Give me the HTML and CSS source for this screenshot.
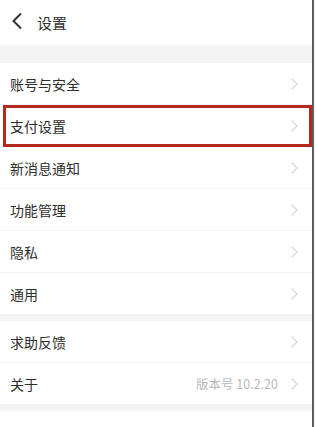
FILE: index.html
```html
<!DOCTYPE html>
<html lang="zh-CN">
<head>
  <meta charset="UTF-8">
  <meta name="viewport" content="width=device-width, initial-scale=1.0">
  <title>设置</title>
  <link rel="stylesheet" href="styles.css">
</head>
<body>
  <div class="screen">
    <div class="topbar">
      <svg class="back" width="13" height="18" viewBox="0 0 13 18">
        <path d="M10 1.5 L2.5 9 L10 16.5" fill="none" stroke="#333" stroke-width="2"/>
      </svg>
      <span class="title">设置</span>
    </div>

    <div class="gap"></div>

    <div class="group">
      <div class="row"><span class="label">账号与安全</span><span class="arrow"></span></div>
      <div class="row highlight"><span class="label">支付设置</span><span class="arrow"></span></div>
      <div class="row"><span class="label">新消息通知</span><span class="arrow"></span></div>
      <div class="row"><span class="label">功能管理</span><span class="arrow"></span></div>
      <div class="row"><span class="label">隐私</span><span class="arrow"></span></div>
      <div class="row last"><span class="label">通用</span><span class="arrow"></span></div>
    </div>

    <div class="gap small"></div>

    <div class="group">
      <div class="row"><span class="label">求助反馈</span><span class="arrow"></span></div>
      <div class="row last">
        <span class="label">关于</span>
        <span class="value">版本号 10.2.20</span>
        <span class="arrow"></span>
      </div>
    </div>

    <div class="gap small"></div>
  </div>
</body>
</html>
```

FILE: styles.css
```css
body {
  margin: 0;
  padding: 0;
  background: #fff;
  font-family: "Noto Sans CJK SC", "Noto Sans", sans-serif;
  color: #333;
}

.screen {
  width: 312px;
  height: 427px;
  border-right: 2px solid #5e5e5e;
  background: #fff;
}

.topbar {
  height: 45px;
  display: flex;
  align-items: center;
  padding-left: 11px;
}

.back {
  margin-top: -4px;
}

.title {
  font-size: 15px;
  margin-left: 13px;
  color: #333;
}

.gap {
  height: 18px;
  background: #f4f4f4;
}

.gap.small {
  height: 7px;
}

.row {
  height: 41px;
  display: flex;
  align-items: center;
  padding: 0 14px 0 10px;
  border-bottom: 1px solid #f3f3f3;
}

.row.last {
  border-bottom: none;
}

.row.highlight {
  outline: 3px solid #b9281f;
  outline-offset: -3px;
  margin-left: 3px;
  padding-left: 7px;
  padding-right: 14px;
}

.label {
  flex: 1;
  font-size: 14px;
  color: #2e2e2e;
}

.value {
  font-size: 12.5px;
  color: #b8b8b8;
  margin-right: 10px;
}

.arrow {
  width: 7px;
  height: 7px;
  border-top: 1.2px solid #cfcfcf;
  border-right: 1.2px solid #cfcfcf;
  transform: rotate(45deg);
  margin-right: 2px;
}
```
